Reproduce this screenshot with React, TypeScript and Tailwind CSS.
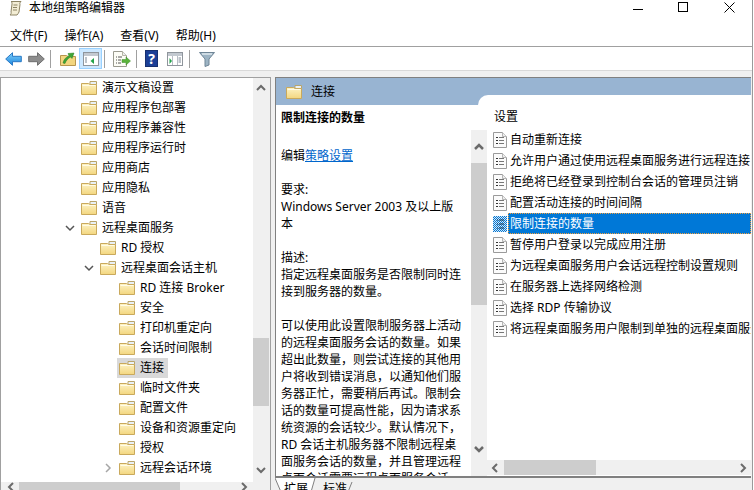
import type { ReactNode } from 'react';

const menus = ['文件(F)', '操作(A)', '查看(V)', '帮助(H)'];

const treeRows = [
  { label: '演示文稿设置', indent: 'pl-[80px]' },
  { label: '应用程序包部署', indent: 'pl-[80px]' },
  { label: '应用程序兼容性', indent: 'pl-[80px]' },
  { label: '应用程序运行时', indent: 'pl-[80px]' },
  { label: '应用商店', indent: 'pl-[80px]' },
  { label: '应用隐私', indent: 'pl-[80px]' },
  { label: '语音', indent: 'pl-[80px]' },
  { label: '远程桌面服务', indent: 'pl-[80px]', arrow: 'open' },
  { label: 'RD 授权', indent: 'pl-[99px]' },
  { label: '远程桌面会话主机', indent: 'pl-[99px]', arrow: 'open' },
  { label: 'RD 连接 Broker', indent: 'pl-[118px]' },
  { label: '安全', indent: 'pl-[118px]' },
  { label: '打印机重定向', indent: 'pl-[118px]' },
  { label: '会话时间限制', indent: 'pl-[118px]' },
  { label: '连接', indent: 'pl-[118px]', selected: true },
  { label: '临时文件夹', indent: 'pl-[118px]' },
  { label: '配置文件', indent: 'pl-[118px]' },
  { label: '设备和资源重定向', indent: 'pl-[118px]' },
  { label: '授权', indent: 'pl-[118px]' },
  { label: '远程会话环境', indent: 'pl-[118px]', arrow: 'closed' },
];

const descLines = [
  '要求:',
  'Windows Server 2003 及以上版',
  '本',
  '',
  '描述:',
  '指定远程桌面服务是否限制同时连',
  '接到服务器的数量。',
  '',
  '可以使用此设置限制服务器上活动',
  '的远程桌面服务会话的数量。如果',
  '超出此数量，则尝试连接的其他用',
  '户将收到错误消息，以通知他们服',
  '务器正忙，需要稍后再试。限制会',
  '话的数量可提高性能，因为请求系',
  '统资源的会话较少。默认情况下，',
  'RD 会话主机服务器不限制远程桌',
  '面服务会话的数量，并且管理远程',
  '桌面会话需要远程桌面服务会话',
];

const settings = [
  '自动重新连接',
  '允许用户通过使用远程桌面服务进行远程连接',
  '拒绝将已经登录到控制台会话的管理员注销',
  '配置活动连接的时间间隔',
  '限制连接的数量',
  '暂停用户登录以完成应用注册',
  '为远程桌面服务用户会话远程控制设置规则',
  '在服务器上选择网络检测',
  '选择 RDP 传输协议',
  '将远程桌面服务用户限制到单独的远程桌面服务会话',
];

function Folder() {
  return (
    <svg width="16" height="14" viewBox="0 0 16 14" className="shrink-0">
      <defs>
        <linearGradient id="folderFill" x1="0" y1="0" x2="0" y2="1">
          <stop offset="0" stopColor="#fdf3c4" />
          <stop offset="1" stopColor="#f3d67f" />
        </linearGradient>
      </defs>
      <path d="M9 .5h6.5v3H9z" fill="#e8f0f8" stroke="#b9a56a" />
      <path d="M.5 2.500h7l1.500 1h6.500v10H.5z" fill="url(#folderFill)" stroke="#c9a95c" />
      <path d="M1.500 4.500h13" stroke="#fffbe6" />
    </svg>
  );
}

function Chevron({ dir, color = '#6b6b6b', width = 2 }: { dir: 'up' | 'down' | 'left' | 'right'; color?: string; width?: number }) {
  const paths = {
    up: 'M1 7l4-4 4 4',
    down: 'M1 3l4 4 4-4',
    left: 'M7 1L3 5l4 4',
    right: 'M3 1l4 4-4 4',
  };
  return (
    <svg width="10" height="10" viewBox="0 0 10 10" className="shrink-0">
      <path d={paths[dir]} fill="none" stroke={color} strokeWidth={width} />
    </svg>
  );
}

function PolicyIcon({ active }: { active?: boolean }) {
  if (active) {
    return (
      <svg width="14" height="16" viewBox="0 0 14 16" className="shrink-0">
        <defs>
          <pattern id="dither" width="2" height="2" patternUnits="userSpaceOnUse">
            <rect width="2" height="2" fill="#0078d7" />
            <rect width="1" height="1" fill="#d8e6f2" />
            <rect x="1" y="1" width="1" height="1" fill="#d8e6f2" />
          </pattern>
        </defs>
        <rect width="14" height="16" fill="url(#dither)" />
        <path d="M4 4h1M4 8h1M4 12h1M6 4h5M6 8h5M6 12h5" stroke="#1a3a55" />
      </svg>
    );
  }
  return (
    <svg width="14" height="16" viewBox="0 0 14 16" className="shrink-0">
      <path d="M.5.500h9l4 4v11H.5z" fill="#fbfbfb" stroke="#9a9a9a" />
      <path d="M9.500.500v4h4" fill="#eee" stroke="#b5b5b5" />
      <path d="M3 5h2v1H3zM3 8h2v1H3zM3 11h2v1H3z" fill="#333" />
      <path d="M6 5.500h5M6 8.500h5M6 11.500h5" stroke="#777" />
    </svg>
  );
}

function ArrowBtn({ back }: { back?: boolean }) {
  return back ? (
    <svg width="17" height="14" viewBox="0 0 17 14">
      <defs>
        <linearGradient id="blueArrow" x1="0" y1="0" x2="0" y2="1">
          <stop offset="0" stopColor="#7fd0fb" />
          <stop offset="1" stopColor="#1c86de" />
        </linearGradient>
      </defs>
      <path d="M.7 7L7.500.7v3.600h8.800v5.400H7.500v3.600z" fill="url(#blueArrow)" stroke="#2a78c4" />
    </svg>
  ) : (
    <svg width="17" height="14" viewBox="0 0 17 14">
      <path d="M16.300 7L9.500.7v3.600H.7v5.400h8.800v3.600z" fill="#8d8d8d" stroke="#6e6e6e" />
    </svg>
  );
}

function WindowIcon({ side }: { side: 'left' | 'right' }) {
  return (
    <svg width="16" height="14" viewBox="0 0 16 14">
      <rect x=".5" y=".5" width="15" height="13" fill="#fff" stroke="#8f959c" />
      <rect x="1" y="1" width="14" height="3" fill="#c3c9d0" />
      <path d="M5.500 4v9M10.500 4v9" stroke={side === 'left' ? '#fff' : '#b8bec6'} />
      {side === 'left' ? (
        <>
          <path d="M2 6h2M2 8h2M2 10h2" stroke="#7b8794" />
          <path d="M11 6v6L7.500 9z" fill="#22a34a" />
        </>
      ) : (
        <>
          <path d="M2.500 6v6L5 9z" fill="#22a34a" />
          <path d="M11.500 6h2.500M11.500 8h2.500M11.500 10h2.500" stroke="#7b8794" />
        </>
      )}
    </svg>
  );
}

function Sep() {
  return <div className="w-px h-[18px] bg-[#a0a0a0] shrink-0" />;
}

function Toolbar() {
  return (
    <div className="h-[23px] flex items-center bg-white">
      <div className="ml-[5px]"><ArrowBtn back /></div>
      <div className="ml-[6px]"><ArrowBtn /></div>
      <div className="ml-[5px]"><Sep /></div>
      <svg width="16" height="16" viewBox="0 0 16 16" className="ml-[9px]">
        <path d="M.5 4.500h6l1.500 1h7.500v9H.5z" fill="#f3d67f" stroke="#b8964e" />
        <path d="M3 12C4 8 6 6 9 5L8 2.500l6-.5-2 5.500L10.500 6C8 7.500 6 9.500 5 12.500z" fill="#3fa535" stroke="#2a7d25" strokeWidth=".5" />
      </svg>
      <div className="ml-[3px] w-[23px] h-[21px] flex items-center justify-center bg-[#cce8ff] border border-[#99d1ff]">
        <WindowIcon side="left" />
      </div>
      <div className="ml-[2px]"><Sep /></div>
      <svg width="18" height="16" viewBox="0 0 18 16" className="ml-[8px]">
        <path d="M.5.500h9l4 4v11H.5z" fill="#fdfdf6" stroke="#9a9a8e" />
        <path d="M9.500.500v4h4" fill="#eee" stroke="#b5b5a5" />
        <path d="M3 6h1M3 9h1M3 12h1M5 6h4M5 9h3M5 12h3" stroke="#555" />
        <path d="M9 8.500h4V6l4.500 4-4.500 4v-2.500H9z" fill="#5ab23a" stroke="#3c8b2a" strokeWidth=".5" />
      </svg>
      <div className="ml-[5px]"><Sep /></div>
      <div className="ml-[8px] w-[13px] h-[17px] flex items-center justify-center bg-[#1c3f96] border border-[#16306f] text-white text-[14px] font-bold leading-none">?</div>
      <div className="ml-[9px]"><WindowIcon side="right" /></div>
      <div className="ml-[6px]"><Sep /></div>
      <svg width="16" height="16" viewBox="0 0 16 16" className="ml-[9px]">
        <path d="M.5 1.500h15L10 8v6l-4 1.500V8z" fill="#9db4c4" stroke="#6f8596" />
        <path d="M3 3h10" stroke="#dfe8ee" strokeWidth="1.500" />
      </svg>
    </div>
  );
}

function Tree() {
  return (
    <div className="w-[252px] shrink-0 bg-white overflow-hidden">
      {treeRows.map((row) => (
        <div key={row.label} className={`relative h-5 flex items-center text-[12px] whitespace-nowrap ${row.indent}`}>
          {row.arrow && (
            <span className="absolute top-[5px] -ml-[16px]">
              {row.arrow === 'open' ? <Chevron dir="down" color="#555" width={1.5} /> : <Chevron dir="right" color="#a6a6a6" width={1.5} />}
            </span>
          )}
          <div className={`flex items-center h-5 -ml-[2px] pl-[2px] pr-[4px] ${row.selected ? 'bg-[#d9d9d9]' : ''}`}>
            <Folder />
            <span className="ml-[5px]">{row.label}</span>
          </div>
        </div>
      ))}
    </div>
  );
}

function DescLine({ children }: { children: ReactNode }) {
  return <div className="h-[17px] leading-[17px] whitespace-nowrap">{children}</div>;
}

export default function App() {
  return (
    <div className="w-[753px] h-[490px] overflow-hidden bg-white text-black text-[12px] font-['Noto_Sans','Noto_Sans_CJK_SC',sans-serif] flex flex-col border-r border-r-[#9a9a9a]">
      <div className="h-[24px] pb-[8px] flex items-center pl-[8px] pr-[17px] shrink-0">
        <svg width="15" height="16" viewBox="0 0 15 16">
          <path d="M3 1.500h10c-1 1-1.500 2-1 3L11 12c-.5 1-1 2-2 3H2c1-1 1.500-2 1-3L4 4c0-1 0-2-1-2.500z" fill="#f3edd4" stroke="#8d8464" />
          <path d="M5.500 5h4M5 7.500h4M5 10h4" stroke="#8d8464" />
        </svg>
        <span className="ml-[6px]">本地组策略编辑器</span>
        <div className="ml-auto -mt-[2px] flex items-center gap-[35px]">
          <svg width="10" height="10" viewBox="0 0 10 10"><path d="M0 7.500h10" stroke="#000" /></svg>
          <svg width="11" height="10" viewBox="0 0 11 10"><rect x=".5" y=".5" width="9" height="9" fill="none" stroke="#000" /></svg>
          <svg width="11" height="11" viewBox="0 0 11 11"><path d="M.5.500l10 10M10.500.500l-10 10" stroke="#000" /></svg>
        </div>
      </div>
      <div className="h-[23px] pt-[1px] flex items-center gap-[17px] pl-[10px] border-b border-b-[#a0a0a0] shrink-0">
        {menus.map((m) => (
          <span key={m}>{m}</span>
        ))}
      </div>
      <Toolbar />
      <div className="h-[7px] bg-[#f0f0f0] border-t border-t-[#d9d9d9] shrink-0" />

      <div className="flex-1 min-h-0 flex bg-[#f0f0f0]">
        {/* left tree */}
        <div className="w-[271px] shrink-0 flex flex-col border-l border-l-[#a0a0a0] border-t border-t-[#a0a0a0] border-r border-r-[#a0a0a0]">
          <div className="h-[404px] shrink-0 flex">
            <Tree />
            <div className="w-[16px] bg-[#f0f0f0] flex flex-col items-center">
              <div className="h-[20px] flex items-center"><Chevron dir="up" /></div>
              <div className="mt-[240px] h-[68px] w-full bg-[#cdcdcd]" />
              <div className="mt-auto h-[17px] flex items-start"><Chevron dir="down" /></div>
            </div>
          </div>
          <div className="flex-1 flex items-center bg-[#f0f0f0]">
            <div className="ml-[5px]"><Chevron dir="left" /></div>
            <div className="ml-[3px] w-[161px] h-full bg-[#cdcdcd]" />
            <div className="ml-[59px]"><Chevron dir="right" /></div>
          </div>
        </div>

        {/* right panel */}
        <div className="ml-[4px] w-[476px] shrink-0 flex flex-col">
          <div className="flex-1 min-h-0 flex flex-col border-l border-l-[#808080] border-t border-t-[#808080] border-b-2 border-b-[#808080] bg-white">
            <div className="h-[27px] shrink-0 bg-[#98b4d2] flex items-center pl-[10px]">
              <Folder />
              <span className="ml-[9px]">连接</span>
            </div>
            <div className="relative flex-1 min-h-0 flex">
              <div className="absolute left-[202px] right-0 -top-[10px] h-[10px] bg-white rounded-tl-[10px]" />
              <div className="w-[195px] shrink-0 overflow-hidden pl-[5px] pt-[4px]">
                <DescLine><span className="font-bold">限制连接的数量</span></DescLine>
                <div className="mt-[21px]">
                  <DescLine>
                    编辑<span className="text-[#0066cc] underline">策略设置</span>
                  </DescLine>
                </div>
                <div className="mt-[17px]">
                  {descLines.map((line, i) => (
                    <DescLine key={i}>{line}</DescLine>
                  ))}
                </div>
              </div>
              <div className="mt-[25px] w-[16px] shrink-0 bg-[#f0f0f0] flex flex-col items-center">
                <div className="h-[33px] flex items-center"><Chevron dir="up" width={2.5} /></div>
                <div className="h-[142px] w-full bg-[#cdcdcd]" />
                <div className="mt-auto h-[32px] flex items-start"><Chevron dir="down" width={2.5} /></div>
              </div>
              <div className="flex-1 min-w-0 flex flex-col overflow-hidden">
                <div className="h-[23px] flex items-center pl-[7px] shrink-0">设置</div>
                <div className="h-[1px] shrink-0" />
                {settings.map((s, i) => {
                  const active = i === 4;
                  return (
                    <div key={s} className="h-[21px] shrink-0 flex items-center pl-[6px] whitespace-nowrap">
                      <PolicyIcon active={active} />
                      <span className={`ml-[1px] pl-[2px] h-[21px] flex-1 flex items-center overflow-hidden ${active ? 'bg-[#0078d7] text-white outline-1 -outline-offset-1 outline-dotted outline-[#f0a040]' : ''}`}>{s}</span>
                    </div>
                  );
                })}
                <div className="mt-auto h-[15px] shrink-0 bg-[#f0f0f0] flex items-center">
                  <div className="ml-[3px]"><Chevron dir="left" /></div>
                  <div className="ml-[4px] w-[92px] h-full bg-[#cdcdcd]" />
                  <div className="ml-auto mr-[3px]"><Chevron dir="right" /></div>
                </div>
                <div className="h-[1px] shrink-0 bg-white" />
              </div>
            </div>
          </div>
          {/* tabs */}
          <div className="h-[12px] shrink-0 flex bg-[#f0f0f0] overflow-hidden">
            <div className="relative w-[42px] h-[16px] flex justify-center pt-[3px] leading-[16px]">
              <svg width="42" height="16" viewBox="0 0 42 16" className="absolute left-0 top-0">
                <path d="M0 0l6 14h30l4-14z" fill="#fff" />
                <path d="M0 0l6 14M36 14l4-14" fill="none" stroke="#808080" />
              </svg>
              <span className="relative">扩展</span>
            </div>
            <div className="relative w-[36px] h-[16px] flex justify-center pt-[3px] leading-[16px]">
              <svg width="36" height="16" viewBox="0 0 36 16" className="absolute left-0 top-0">
                <path d="M31 14l4-10" fill="none" stroke="#808080" />
              </svg>
              <span className="relative">标准</span>
            </div>
          </div>
        </div>
      </div>
    </div>
  );
}
